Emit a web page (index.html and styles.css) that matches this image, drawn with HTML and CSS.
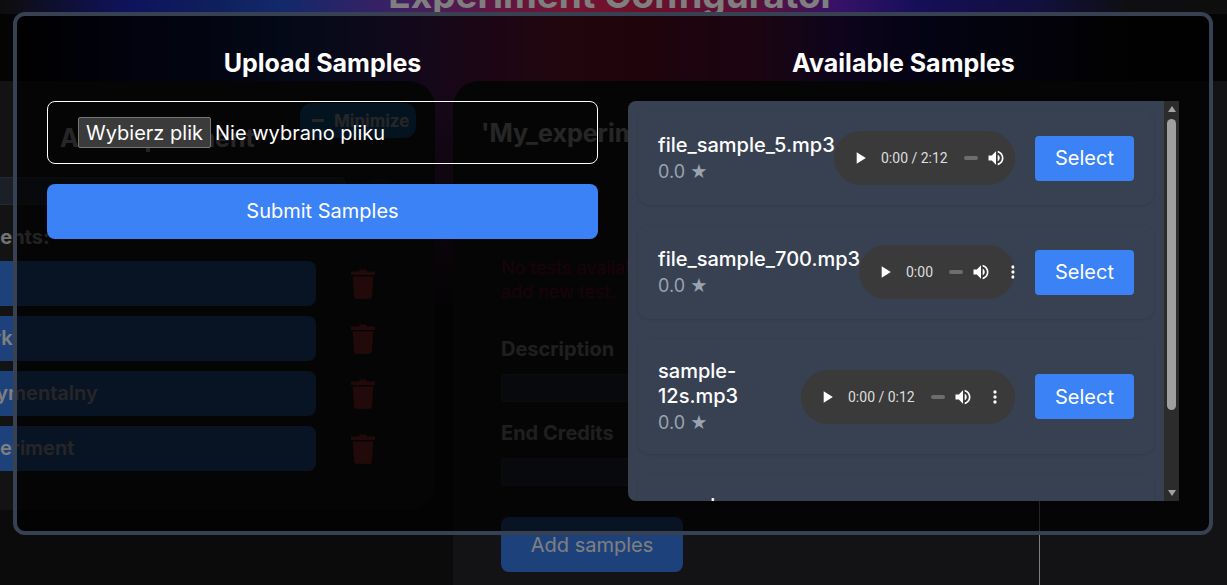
FILE: index.html
```html
<!DOCTYPE html>
<html lang="pl">
<head>
  <meta charset="UTF-8">
  <meta name="viewport" content="width=device-width, initial-scale=1.0">
  <title>Experiment Configurator</title>
  <link rel="stylesheet" href="styles.css">
</head>
<body>
  <svg class="defs" width="0" height="0">
    <symbol id="i-play" viewBox="0 0 24 24"><path d="M8 5v14l11-7z"/></symbol>
    <symbol id="i-vol" viewBox="0 0 24 24"><path d="M3 9v6h4l5 5V4L7 9H3zm13.5 3c0-1.77-1.02-3.29-2.5-4.03v8.05c1.48-.73 2.5-2.25 2.5-4.02zM14 3.23v2.06c2.89.86 5 3.54 5 6.71s-2.11 5.85-5 6.71v2.06c4.01-.91 7-4.49 7-8.77s-2.99-7.86-7-8.77z"/></symbol>
    <symbol id="i-dots" viewBox="0 0 24 24"><circle cx="12" cy="6" r="2"/><circle cx="12" cy="12" r="2"/><circle cx="12" cy="18" r="2"/></symbol>
    <symbol id="i-trash" viewBox="0 0 24 30"><path d="M8 2.5 9 0.5h6l1 2h8v3.5H0V2.5z"/><path d="M1.800 7.500h20.400l-1.400 20.500a2 2 0 0 1-2 1.800H5.200a2 2 0 0 1-2-1.800z"/></symbol>
  </svg>

  <!-- strona pod spodem -->
  <div class="page">
    <header class="top">
      <h1>Experiment Configurator</h1>
    </header>
    <main class="columns">
      <section class="left-panel">
        <div class="left-head">
          <h2>Add experiment</h2>
          <button class="minimize"><span class="minus"></span>Minimize</button>
        </div>
        <div class="new-row">
          <div class="fake-input"></div>
          <div class="round-btn"></div>
        </div>
        <p class="exp-label">Experiments:</p>
        <ul class="exp-list">
          <li><div class="exp-btn">Test</div><svg class="trash"><use href="#i-trash"/></svg></li>
          <li><div class="exp-btn">Badanie muzyki</div><svg class="trash"><use href="#i-trash"/></svg></li>
          <li><div class="exp-btn">Test eksperymentalny</div><svg class="trash"><use href="#i-trash"/></svg></li>
          <li><div class="exp-btn">Nowy experiment</div><svg class="trash"><use href="#i-trash"/></svg></li>
        </ul>
      </section>
      <section class="right-panel">
        <div class="form-col">
          <h2>'My_experiment'</h2>
          <p class="no-tests">No tests available, please add new test.</p>
          <label class="field-label">Description</label>
          <div class="fake-input"></div>
          <label class="field-label">End Credits</label>
          <div class="fake-input"></div>
          <button class="add-samples">Add samples</button>
        </div>
        <div class="tree-col"></div>
      </section>
    </main>
  </div>

  <!-- modal -->
  <div class="backdrop">
    <div class="modal">
      <div class="modal-col">
        <h3>Upload Samples</h3>
        <div class="file-box">
          <span class="file-btn">Wybierz plik</span>
          <span class="file-name">Nie wybrano pliku</span>
        </div>
        <button class="submit">Submit Samples</button>
      </div>
      <div class="modal-col">
        <h3>Available Samples</h3>
        <div class="samples">
          <div class="samples-list">
            <div class="card">
              <div class="info">
                <div class="name">file_sample_5.mp3</div>
                <div class="rating">0.0 <span class="star">★</span></div>
              </div>
              <div class="player player-lg">
                <svg class="ic"><use href="#i-play"/></svg>
                <span class="time">0:00 / 2:12</span>
                <span class="track"></span>
                <svg class="ic vol"><use href="#i-vol"/></svg>
                <svg class="ic dots"><use href="#i-dots"/></svg>
              </div>
              <button class="select">Select</button>
            </div>
            <div class="card">
              <div class="info">
                <div class="name">file_sample_700.mp3</div>
                <div class="rating">0.0 <span class="star">★</span></div>
              </div>
              <div class="player player-sm">
                <svg class="ic"><use href="#i-play"/></svg>
                <span class="time">0:00</span>
                <span class="track"></span>
                <svg class="ic vol"><use href="#i-vol"/></svg>
                <svg class="ic dots"><use href="#i-dots"/></svg>
              </div>
              <button class="select">Select</button>
            </div>
            <div class="card">
              <div class="info">
                <div class="name">sample-12s.mp3</div>
                <div class="rating">0.0 <span class="star">★</span></div>
              </div>
              <div class="player player-full">
                <svg class="ic"><use href="#i-play"/></svg>
                <span class="time">0:00 / 0:12</span>
                <span class="track"></span>
                <svg class="ic vol"><use href="#i-vol"/></svg>
                <svg class="ic dots"><use href="#i-dots"/></svg>
              </div>
              <button class="select">Select</button>
            </div>
            <div class="card">
              <div class="info">
                <div class="name">sample-15s.mp3</div>
                <div class="rating">0.0 <span class="star">★</span></div>
              </div>
              <div class="player player-full">
                <svg class="ic"><use href="#i-play"/></svg>
                <span class="time">0:00 / 0:15</span>
                <span class="track"></span>
                <svg class="ic vol"><use href="#i-vol"/></svg>
                <svg class="ic dots"><use href="#i-dots"/></svg>
              </div>
              <button class="select">Select</button>
            </div>
          </div>
          <div class="scrollbar">
            <span class="arrow-up"></span>
            <span class="thumb"></span>
            <span class="arrow-down"></span>
          </div>
        </div>
      </div>
    </div>
  </div>
</body>
</html>
```
FILE: styles.css
```css
*{margin: 0; padding: 0; box-sizing: border-box;}
html, body{height: 100%; overflow: hidden;}
body{
  font-family: Inter, "Liberation Sans", sans-serif;
  color: #fff;
  background: #171717;
  position: relative;
}
ul{list-style: none;}
button{font-family: inherit; border: none; color: #fff; cursor: pointer;}
.defs{display: block; height: 0;}

/* page under the modal */
.page{
  height: 585px;
  overflow: hidden;
  background:
    linear-gradient(to bottom, rgba(23,23,23,0) 90px, #171717 320px),
    linear-gradient(to right, rgba(0,0,0,.7) 0, rgba(0,0,0,0) 450px, rgba(0,0,0,0) 780px, rgba(0,0,0,.7) 1227px) 0 14px no-repeat,
    linear-gradient(to right, #1c1a1a 0px, #1e26bc 130px, #1f3db8 210px, #2452d6 280px, #7c40c8 400px, #c42a80 500px, #e62a62 570px, #d81f50 640px, #b02278 760px, #6a24d0 840px, #2a1eb0 920px, #24207a 1040px, #1e1e24 1130px, #1c1c1c 1227px);
}
.top{height: 81px; display: flow-root;}
.top h1{
  font-size: 37px;
  line-height: 44px;
  font-weight: 700;
  text-align: center;
  margin-top: -27px;
  padding-right: 3px;
  color: #fff;
}
.columns{display: flex;}

.left-panel{
  width: 505px;
  height: 429px;
  margin-left: -70px;
  padding: 22px 0 0 0;
  background: #292629;
  border-radius: 26px;
  flex-shrink: 0;
}
.left-head{display: flex; align-items: flex-start; justify-content: space-between; padding: 0 19px 0 130px; height: 74px;}
.left-head h2{font-size: 25px; line-height: 34px; margin-top: 18px; white-space: nowrap;}
.minimize{
  display: flex; align-items: center; gap: 10px;
  width: 116px; height: 35px;
  padding-left: 12px;
  background: #1d83d8;
  border-radius: 12px;
  font-size: 17px;
  font-weight: 700;
}
.minus{width: 12px; height: 3px; background: #fff; flex-shrink: 0;}
.new-row{display: flex; align-items: center; gap: 22px;}
.new-row .fake-input{width: 415px;}
.fake-input{
  height: 28px;
  background: #374151;
  border: 1px solid #4b5563;
  border-radius: 4px;
}
.round-btn{width: 26px; height: 26px; border-radius: 50%; background: #2a3038;}
.exp-label{
  font-size: 20px;
  line-height: 28px;
  font-weight: 700;
  color: #e5e7eb;
  margin-top: 18px;
  margin-left: -10px;
  width: 120px;
  text-align: right;
}
.exp-list{margin-top: 10px; display: flex; flex-direction: column; gap: 10px;}
.exp-list li{display: flex; align-items: center; gap: 35px;}
.exp-btn{
  width: 386px;
  height: 45px;
  background: #3b82f6;
  border-radius: 8px;
  font-size: 20px;
  font-weight: 600;
  line-height: 45px;
  padding-left: 8px;
  white-space: nowrap;
}
.exp-list li:nth-child(2) .exp-btn{text-indent: -73px;}
.exp-list li:nth-child(3) .exp-btn{text-indent: -55px;}
.exp-list li:nth-child(4) .exp-btn{text-indent: -34px;}
.trash{width: 24px; height: 30px; fill: #ef4444; flex-shrink: 0;}

.right-panel{
  display: flex;
  width: 900px;
  height: 700px;
  margin-left: 18px;
  background: #262428;
  border-radius: 26px;
  flex-shrink: 0;
}
.form-col{width: 586px; padding: 34px 0 0 28px; flex-shrink: 0;}
.form-col h2{font-size: 25px; line-height: 36px; white-space: nowrap;}
.no-tests{
  width: 240px;
  margin: 105px 0 0 20px;
  font-size: 18px;
  line-height: 24px;
  color: #b0104a;
}
.field-label{display: block; margin: 31px 0 0 20px; font-size: 20px; line-height: 28px; font-weight: 700; color: #d1d5db;}
.form-col .fake-input{margin: 11px 0 0 20px; width: 400px;}
.form-col .fake-input + .field-label{margin-top: 17px;}
.add-samples{
  display: block;
  width: 182px;
  height: 55px;
  margin: 31px 0 0 20px;
  background: #3b82f6;
  border-radius: 8px;
  font-size: 20px;
}
.tree-col{flex: 1; margin-top: 40px; border-left: 1px solid #fff;}

/* modal */
.backdrop{
  position: absolute;
  inset: 0;
  background: rgba(0,0,0,.5);
}
.modal{
  position: absolute;
  left: 13px; top: 12px;
  width: 1200px; height: 523px;
  padding: 30px;
  display: grid;
  grid-template-columns: 1fr 1fr;
  gap: 30px;
  background: rgba(0,0,0,.7);
  border: 4px solid #374151;
  border-radius: 12px;
}
.modal-col{min-width: 0;}
.modal-col h3{font-size: 25px; line-height: 34px; font-weight: 700; text-align: center; margin-bottom: 21px;}
.file-box{
  display: flex;
  align-items: center;
  gap: 4px;
  height: 63px;
  padding-left: 30px;
  border: 1px solid #fff;
  border-radius: 8px;
  font-size: 20px;
}
.file-btn{
  display: flex; align-items: center; justify-content: center;
  width: 133px; height: 31px;
  background: #3b3b3b;
  border: 1px solid #767676;
  border-radius: 2px;
}
.submit{
  display: block;
  width: 100%; height: 55px;
  margin-top: 20px;
  padding-bottom: 2px;
  background: #3b82f6;
  border-radius: 8px;
  font-size: 20px;
}
.samples{
  display: flex;
  height: 400px;
  background: #374151;
  border-radius: 8px 0 0 8px;
  overflow: hidden;
}
.samples-list{flex: 1; min-width: 0; padding: 10px; overflow: hidden;}
.card{
  display: flex;
  align-items: center;
  padding: 20px;
  margin-bottom: 20px;
  border-radius: 12px;
  box-shadow: 0 1px 3px rgba(0,0,0,.12);
}
.info{flex: 1; min-width: 0;}
.name{font-size: 20px; line-height: 25px; font-weight: 500;}
.rating{font-size: 18px; line-height: 25px; margin: 1px 0 -1px; color: #9ca3af;}
.star{font-size: 17px; line-height: 1;}
.player{
  display: flex;
  align-items: center;
  height: 54px;
  padding-left: 16px;
  background: #3a3a3a;
  border-radius: 27px;
  overflow: hidden;
  flex-shrink: 0;
  font-family: Roboto, sans-serif;
  font-size: 14px;
  color: #dedede;
}
.player-lg{width: 181px;}
.player-sm{width: 156px;}
.player-full{width: 214px;}
.ic{width: 20px; height: 20px; fill: #fff; flex-shrink: 0;}
.time{margin-left: 11px; white-space: nowrap; flex-shrink: 0;}
.track{width: 14px; height: 4px; margin-left: 16px; background: #6d6d6d; border-radius: 2px; flex-shrink: 0;}
.vol{margin-left: 8px;}
.dots{margin-left: 12px;}
.select{
  width: 99px; height: 45px;
  margin-left: 20px;
  background: #3b82f6;
  border-radius: 4px;
  font-size: 20px;
  flex-shrink: 0;
}
.scrollbar{
  display: flex;
  flex-direction: column;
  align-items: center;
  width: 15px;
  padding: 5px 0;
  background: #2c2c2c;
  flex-shrink: 0;
}
.arrow-up{border: solid transparent; border-width: 0 4px 6px; border-bottom-color: #a3a3a3;}
.arrow-down{border: solid transparent; border-width: 6px 4px 0; border-top-color: #a3a3a3; margin-top: auto;}
.thumb{width: 9px; height: 291px; margin-top: 7px; background: #9f9f9f; border-radius: 5px;}
```
